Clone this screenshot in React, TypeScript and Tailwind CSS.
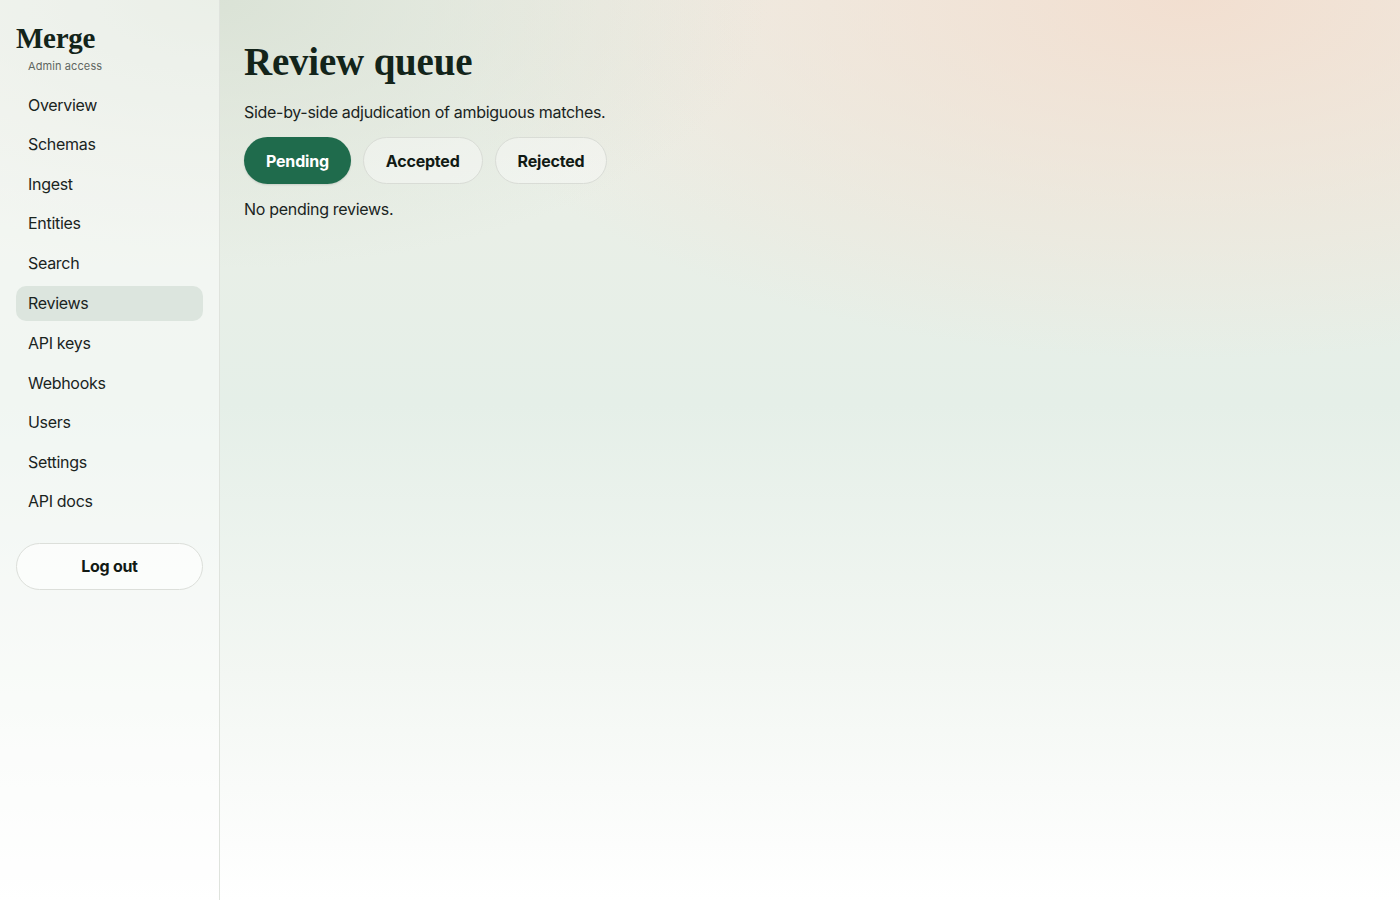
const nav = [
  "Overview",
  "Schemas",
  "Ingest",
  "Entities",
  "Search",
  "Reviews",
  "API keys",
  "Webhooks",
  "Users",
  "Settings",
  "API docs",
]

const tabs = ["Pending", "Accepted", "Rejected"]

export default function App() {
  return (
    <div className="relative min-h-[900px] w-full overflow-hidden bg-[linear-gradient(180deg,#eef0e9_0%,#e9efe7_25%,#e5efe8_45%,#f3f7f3_75%,#ffffff_100%)] font-['Inter','Liberation_Sans',Arial,sans-serif] text-[#15201a]">
      {/* soft colour washes */}
      <div className="pointer-events-none absolute inset-0 bg-[radial-gradient(ellipse_55%_40%_at_85%_0%,rgba(242,222,207,0.95),rgba(242,222,207,0)_100%)]" />
      <div className="pointer-events-none absolute inset-0 bg-[radial-gradient(ellipse_40%_30%_at_15%_0%,rgba(216,225,212,0.9),rgba(216,225,212,0)_100%)]" />

      <div className="relative flex min-h-[900px]">
        <aside className="flex w-[220px] shrink-0 flex-col border-r border-[#dfe3dd] bg-white/45 px-4 pt-[22px]">
          <div className="font-['Liberation_Serif',Georgia,serif] text-[29px] leading-8 font-bold tracking-[-0.3px] text-[#13241a]">
            Merge
          </div>
          <div className="mt-[4px] pl-3 text-[11px] leading-4 tracking-[0.1px] text-[#5f6661]">Admin access</div>

          <nav className="mt-[13px] flex flex-col gap-[4.6px]">
            {nav.map((item) => (
              <div
                key={item}
                className={
                  "rounded-[10px] px-3 py-[7.5px] text-[16px] leading-5 tracking-[-0.3px] text-[#1a241e] " +
                  (item === "Reviews" ? "mt-[1px] bg-[#dce5de]" : "")
                }
              >
                {item}
              </div>
            ))}
          </nav>

          <button className="mt-[24px] h-[47px] w-full rounded-full border border-[#dcdfda] bg-white/60 text-[16px] font-bold tracking-[-0.3px] text-[#111a14]">
            Log out
          </button>
        </aside>

        <main className="flex-1 px-6 pt-[40px]">
          <h1 className="font-['Liberation_Serif',Georgia,serif] text-[39px] leading-[44px] font-bold tracking-[-0.2px] text-[#13241a]">
            Review queue
          </h1>
          <p className="mt-[18px] text-[16px] leading-5 tracking-[-0.3px] text-[#1a241e]">
            Side-by-side adjudication of ambiguous matches.
          </p>

          <div className="mt-[15px] flex gap-3">
            {tabs.map((t) => (
              <button
                key={t}
                className={
                  "h-[47px] rounded-full px-[22px] text-[16px] font-bold tracking-[-0.2px] " +
                  (t === "Pending"
                    ? "bg-[#1f6b4c] text-white shadow-[0_1px_2px_rgba(0,0,0,0.12)]"
                    : "border border-[#d9dcd6] bg-white/35 text-[#111a14]")
                }
              >
                {t}
              </button>
            ))}
          </div>

          <p className="mt-[15px] text-[16px] leading-5 tracking-[-0.3px] text-[#1a241e]">No pending reviews.</p>
        </main>
      </div>
    </div>
  )
}
